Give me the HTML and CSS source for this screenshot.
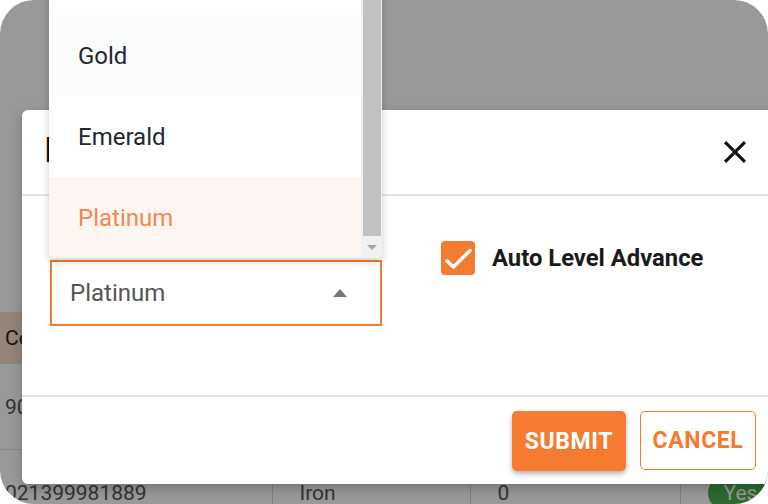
FILE: index.html
```html
<!DOCTYPE html>
<html lang="en">
<head>
  <meta charset="UTF-8" />
  <meta name="viewport" content="width=device-width, initial-scale=1.0"/>
  <title>Edit Member Level</title>
  <link rel="stylesheet" href="styles.css">
</head>
<body>
  <div class="screen">

    <!-- PAGE BEHIND THE DIALOG -->
    <div class="page">
      <div class="page-top"></div>
      <table class="grid">
        <colgroup>
          <col class="c1"><col class="c2"><col class="c3"><col class="c4">
        </colgroup>
        <tr>
          <th>Contact</th>
          <th>Level</th>
          <th>Points</th>
          <th>Active</th>
        </tr>
        <tr>
          <td>9037751240</td>
          <td>Gold</td>
          <td>120</td>
          <td><span class="chip">Yes</span></td>
        </tr>
        <tr>
          <td>021399981889</td>
          <td>Iron</td>
          <td>0</td>
          <td><span class="chip">Yes</span></td>
        </tr>
      </table>
    </div>

    <div class="backdrop"></div>

    <!-- DIALOG -->
    <div class="dialog">
      <div class="dialog-head">
        <h2>Edit Member Level</h2>
        <button class="close" aria-label="Close">
          <svg viewBox="0 0 24 24" width="38" height="38"><path d="M19 6.41 17.59 5 12 10.59 6.41 5 5 6.41 10.59 12 5 17.59 6.41 19 12 13.41 17.59 19 19 17.59 13.41 12z" fill="#111"/></svg>
        </button>
      </div>

      <div class="dialog-body">
        <div class="field">
          <span class="field-label">Level</span>
          <div class="select-wrap">
            <div class="select">
              <span>Platinum</span>
              <span class="caret"></span>
            </div>

            <!-- OPEN MENU (scrolled, first option is above the viewport) -->
            <div class="menu">
              <ul class="options">
                <li></li>
                <li class="hover">Gold</li>
                <li>Emerald</li>
                <li class="selected">Platinum</li>
              </ul>
              <div class="scrollbar">
                <div class="thumb"></div>
                <div class="arrow"></div>
              </div>
            </div>
          </div>
        </div>

        <label class="check">
          <span class="box">
            <svg viewBox="0 0 34 34" width="34" height="34"><polyline points="6,20 12.5,26 29,9.5" fill="none" stroke="#fff" stroke-width="3.5" stroke-linecap="round" stroke-linejoin="round"/></svg>
          </span>
          Auto Level Advance
        </label>
      </div>

      <div class="dialog-foot">
        <button class="btn btn-primary">SUBMIT</button>
        <button class="btn btn-outline">CANCEL</button>
      </div>
    </div>

  </div>
</body>
</html>
```

FILE: styles.css
```css
body {
  margin: 0;
  background: #fff;
  font-family: Roboto, "Liberation Sans", sans-serif;
}
.screen {
  position: relative;
  width: 768px;
  height: 504px;
  border-radius: 34px;
  overflow: hidden;
  background: #fff;
}

/* page behind */
.page {
  display: flex;
  flex-direction: column;
}
.page-top {
  height: 312px;
  flex: none;
}
.grid {
  border-collapse: collapse;
  table-layout: fixed;
  width: 900px;
  font-size: 21px;
  color: #555;
}
.grid .c1 { width: 272px; }
.grid .c2 { width: 198px; }
.grid .c3 { width: 210px; }
.grid th, .grid td {
  text-align: left;
  padding: 0 0 0 27px;
  white-space: nowrap;
  overflow: hidden;
}
.grid th {
  height: 51px;
  background: #fcdcc8;
  font-weight: 400;
  color: #222;
}
.grid td {
  height: 85px;
  border-top: 1px solid #e2e2e2;
  border-right: 1px solid #d4d4d4;
}
.grid th:first-child, .grid td:first-child {
  padding-left: 5px;
}
.chip {
  display: inline-block;
  padding: 0 16px;
  line-height: 34px;
  border-radius: 17px;
  background: #4caf50;
  color: #fff;
}

.backdrop {
  position: absolute;
  inset: 0;
  background: rgba(0,0,0,0.4);
}

/* dialog */
.dialog {
  position: absolute;
  left: 22px;
  top: 110px;
  width: 760px;
  height: 374px;
  background: #fff;
  border-radius: 6px;
  box-shadow: 0 4px 12px rgba(0,0,0,0.25);
  display: flex;
  flex-direction: column;
}
.dialog-head {
  height: 84px;
  flex: none;
  display: flex;
  align-items: center;
  justify-content: space-between;
  padding: 0 28px 0 22px;
}
.dialog-head h2 {
  margin: 0 0 4px;
  font-size: 35px;
  font-weight: 400;
  color: #111;
}
.close {
  border: none;
  background: none;
  padding: 0;
  display: flex;
  cursor: pointer;
}
.dialog-body {
  flex: 1;
  display: flex;
  align-items: flex-start;
  padding: 45px 0 0 28px;
  border-top: 2px solid #e4e4e4;
  border-bottom: 2px solid #e4e4e4;
}
.field {
  width: 332px;
}
.field-label {
  display: block;
  font-size: 14px;
  line-height: 19px;
  color: #666;
}
.select-wrap {
  position: relative;
}
.select {
  height: 66px;
  box-sizing: border-box;
  border: 2px solid #f47b30;
  display: flex;
  align-items: center;
  justify-content: space-between;
  padding: 0 33px 0 18px;
  font-size: 24px;
  color: #555;
}
.caret {
  border-left: 7px solid transparent;
  border-right: 7px solid transparent;
  border-bottom: 8px solid #777;
}

/* open select menu */
.menu {
  position: absolute;
  left: -1px;
  bottom: calc(100% + 2px);
  width: 333px;
  display: flex;
  background: #fff;
  border-radius: 0 0 4px 4px;
  box-shadow: 0 3px 8px rgba(0,0,0,0.2);
  overflow: hidden;
}
.options {
  flex: 1;
  list-style: none;
  margin: 0;
  padding: 0;
}
.options li {
  height: 81px;
  display: flex;
  align-items: center;
  padding-left: 29px;
  font-size: 24px;
  color: #1f2733;
}
.options li.hover { background: #fafbfb; }
.options li.selected {
  background: #fdf5f1;
  color: #f4874e;
}
.scrollbar {
  width: 21px;
  background: #f1f1f1;
  display: flex;
  flex-direction: column;
}
.thumb {
  flex: 1;
  margin: 0 1px 0 2px;
  background: #c1c1c1;
}
.arrow {
  height: 22px;
  display: flex;
  align-items: center;
  justify-content: center;
}
.arrow::before {
  content: "";
  border-left: 5px solid transparent;
  border-right: 5px solid transparent;
  border-top: 5px solid #a3a3a3;
}

.check {
  display: flex;
  align-items: center;
  gap: 17px;
  margin-left: 59px;
  font-size: 23.8px;
  font-weight: 700;
  color: #1a1a1a;
}
.box {
  width: 34px;
  height: 34px;
  border-radius: 4px;
  background: #f47b30;
  display: flex;
}

/* footer */
.dialog-foot {
  height: 87px;
  flex: none;
  box-sizing: border-box;
  display: flex;
  justify-content: flex-end;
  align-items: flex-start;
  gap: 14px;
  padding: 14px 26px 0 0;
}
.btn {
  height: 60px;
  border-radius: 5px;
  font-family: inherit;
  font-size: 23px;
  font-weight: 700;
  letter-spacing: 0.6px;
  padding: 0;
  cursor: pointer;
}
.btn-primary {
  width: 114px;
  background: #f47b30;
  color: #fff;
  border: none;
  box-shadow: 0 3px 5px rgba(0,0,0,0.3);
}
.btn-outline {
  width: 116px;
  height: 59px;
  background: #fff;
  color: #f47b30;
  border: 1.5px solid #f47b30;
}
```
